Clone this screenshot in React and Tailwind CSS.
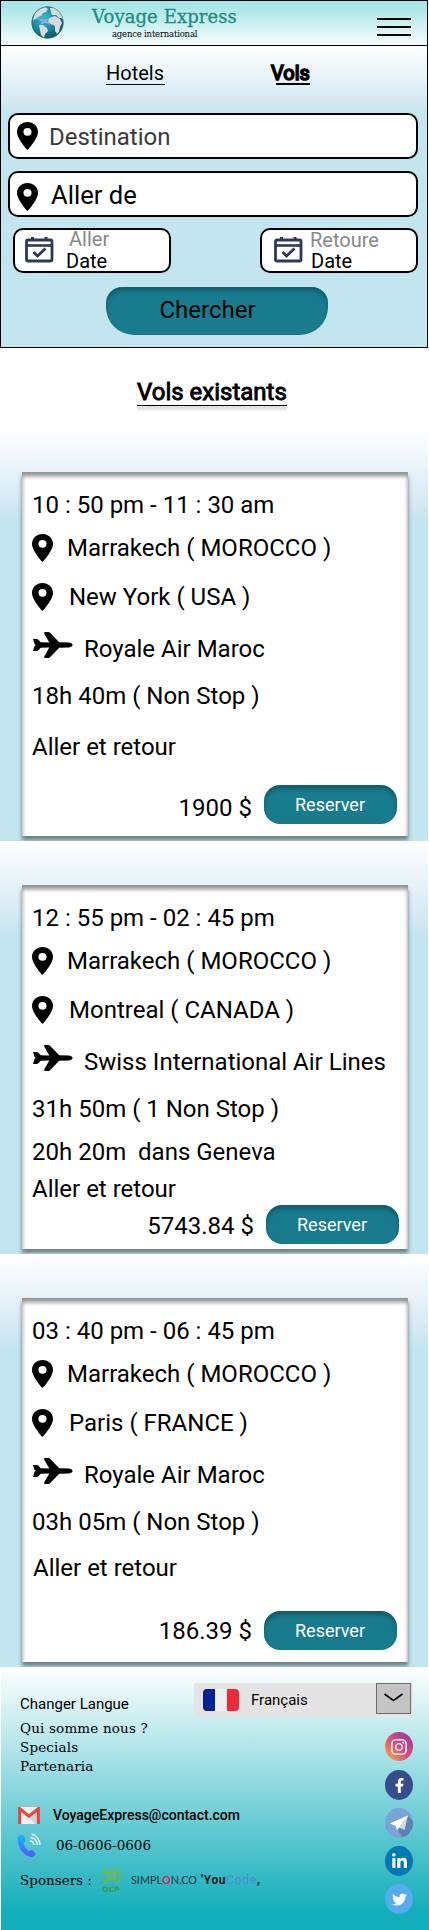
import React from "react";
import { FaInstagram, FaFacebookF, FaLinkedinIn, FaTwitter } from "react-icons/fa";

function Pin({ className = "" }) {
  return (
    <svg className={`h-[28px] w-[21px] shrink-0 ${className}`} viewBox="5 2 14 20" preserveAspectRatio="none">
      <path d="M12 2C8.13 2 5 5.13 5 9c0 5.25 7 13 7 13s7-7.75 7-13c0-3.87-3.13-7-7-7zm0 9.8a2.7 2.8 0 1 1 0-5.6 2.7 2.8 0 0 1 0 5.6z" />
    </svg>
  );
}

function Plane() {
  return (
    <svg className="-mt-[3px] h-[26px] w-[40px] shrink-0" viewBox="0 0 40 26">
      <path d="M0 7h3.8q1 0 1.6.8l2.3 2.4 8.6.2L11.2 1.4Q10.700 0 12.200 0h3.300q.9 0 1.500.7L26.200 10.300 36 10.500q3.600.6 3.600 2.500T36 15.500l-9.800.2L17 25.300q-.6.7-1.500.7h-3.300q-1.500 0-1-1.400l5.100-9-8.600.2-2.300 2.400q-.6.8-1.600.8H0l1.400-4.600q.1-.9 1.600-1.400-1.500-.5-1.600-1.400z" />
    </svg>
  );
}

function Calendar({ className = "" }) {
  return (
    <svg className={`h-[27px] w-[29px] shrink-0 ${className}`} viewBox="0 0 29 27" fill="none" stroke="#2e3a59">
      <rect x="1.500" y="4" width="25.500" height="21" rx="1.500" strokeWidth="2.800" />
      <path d="M1.500 9.500H27" strokeWidth="2.600" />
      <path d="M7.500 1v4M21 1v4" strokeWidth="3" />
      <path d="M8.500 16l4 4 8-7.500" strokeWidth="2.800" />
    </svg>
  );
}

function Globe() {
  return (
    <svg className="ml-[30px] mt-[5px] h-[33px] w-[33px]" viewBox="0 0 33 33">
      <defs>
        <radialGradient id="sea" cx="38%" cy="35%" r="70%">
          <stop offset="0" stopColor="#35bccb" />
          <stop offset=".6" stopColor="#168497" />
          <stop offset="1" stopColor="#0f4f60" />
        </radialGradient>
        <clipPath id="ball"><circle cx="16.500" cy="16.500" r="16" /></clipPath>
      </defs>
      <circle cx="16.500" cy="16.500" r="16" fill="url(#sea)" />
      <g clipPath="url(#ball)" fill="#d9dcde">
        <path d="M4 7l5-4 5-2 3 2-2 3-3 1-2 3-3 1-2 2-3 1z" />
        <path d="M19 2l6 0 6 5 2 7-3-2-2 0-3-3-4 0-1-3z" />
        <path d="M18 12l6-2 5 3 2 4-2 4-1 5-2 2-2-3 0-5-4-2-3-2z" />
        <path d="M8 19l4 0 4 3 1 3-3 3-1 4-3-3-1-5z" />
      </g>
      <path d="M6 12l8 2 6-3-4 4 4 4-6-2-6 2 3-3z" fill="#8fa6e0" />
      <circle cx="16.500" cy="16.500" r="15.700" fill="none" stroke="#2f6f7c" strokeOpacity=".5" />
    </svg>
  );
}

const BG = "bg-[linear-gradient(180deg,#ffffff_0%,#d5e9f3_18%,#c3e5ef_23%)]";

function Header() {
  return (
    <header className="flex h-[46px] items-start border border-black bg-[linear-gradient(180deg,#a6e5e7_10%,#f6fcfc_100%)]">
      <Globe />
      <div className="ml-[28px] flex w-[147px] flex-col">
        <span className="mt-[3px] whitespace-nowrap font-['DejaVu_Serif',serif] text-[18px] leading-[25px] tracking-[0.100px] text-[#1f8a84] [-webkit-text-stroke:0.300px_#1f8a84]">Voyage Express</span>
        <span className="ml-[20px] whitespace-nowrap font-['DejaVu_Serif',serif] text-[8.500px] leading-[10px] tracking-[-0.200px] text-black">agence international</span>
      </div>
      <div className="ml-auto mr-[16px] mt-[17px] flex w-[34px] flex-col gap-[6px]">
        <i className="h-[2px] bg-black" />
        <i className="h-[2px] bg-black" />
        <i className="h-[2px] bg-black" />
      </div>
    </header>
  );
}

function Search() {
  return (
    <section className={`flex h-[302px] flex-col border border-t-0 border-black ${BG}`}>
      <nav className="flex h-[67px] text-[20px] leading-[24px]">
        <a className="ml-[105px] mt-[15px] h-[24px] w-[59px] border-b border-black">Hotels</a>
        <div className="ml-[106px] mt-[15px] w-[40px]">
          <a className="block h-[22px] [-webkit-text-stroke:1.600px_#000]">Vols</a>
          <div className="ml-[5px] h-[2px] w-[34px] bg-black" />
        </div>
      </nav>
      <div className="ml-[7px] flex h-[46px] w-[410px] items-start rounded-[10px] border-2 border-black bg-white">
        <Pin className="ml-[7px] mt-[7px]" />
        <span className="ml-[11px] mt-[8px] text-[24px] leading-[28px] text-[#3a3a3a]">Destination</span>
      </div>
      <div className="ml-[7px] mt-[12px] flex h-[46px] w-[410px] items-start rounded-[10px] border-2 border-black bg-white">
        <Pin className="ml-[7px] mt-[10px]" />
        <span className="ml-[13px] mt-[8px] text-[25.600px] leading-[28px]">Aller de</span>
      </div>
      <div className="ml-[12px] mt-[11px] flex w-[405px] justify-between text-[20px] leading-[20px]">
        <div className="flex h-[45px] w-[158px] items-start rounded-[10px] border-2 border-black bg-white">
          <Calendar className="ml-[10px] mt-[6px]" />
          <div className="ml-[12px] flex flex-col">
            <span className="-mt-px ml-[3px] text-[#888]">Aller</span>
            <span className="mt-[2px]">Date</span>
          </div>
        </div>
        <div className="flex h-[45px] w-[158px] items-start rounded-[10px] border-2 border-black bg-white">
          <Calendar className="ml-[12px] mt-[6px]" />
          <div className="ml-[7px] flex flex-col">
            <span className="text-[#888]">Retoure</span>
            <span className="ml-px mt-px">Date</span>
          </div>
        </div>
      </div>
      <button className="ml-[105px] mt-[14px] h-[48px] w-[222px] rounded-b-[28px] rounded-t-[16px] bg-[#187b8e] pr-[19px] pb-[2px] text-[24px] leading-[28px] shadow-[inset_0_4px_4px_rgba(0,0,0,0.25)]">Chercher</button>
    </section>
  );
}

const flights = [
  {
    rows: [
      { text: "10 : 50 pm - 11 : 30 am", cls: "mt-[19px]" },
      { icon: "pin", text: "Marrakech ( MOROCCO )", cls: "mt-[15px] gap-[14px]" },
      { icon: "pin", text: "New York ( USA )", cls: "mt-[21px] gap-[16px]" },
      { icon: "plane", text: "Royale Air Maroc", cls: "mt-[24px] gap-[11px] pl-px" },
      { text: "18h 40m ( Non Stop )", cls: "mt-[19px]" },
      { text: "Aller et retour", cls: "mt-[23px]" },
    ],
    price: "1900 $",
    foot: "mt-[24px] mr-[11px] gap-[12px]",
    priceCls: "mt-[9px]",
  },
  {
    rows: [
      { text: "12 : 55 pm - 02 : 45 pm", cls: "mt-[19px]" },
      { icon: "pin", text: "Marrakech ( MOROCCO )", cls: "mt-[15px] gap-[14px]" },
      { icon: "pin", text: "Montreal ( CANADA )", cls: "mt-[21px] gap-[16px]" },
      { icon: "plane", text: "Swiss International Air Lines", cls: "mt-[24px] gap-[11px] pl-px" },
      { text: "31h 50m ( 1 Non Stop )", cls: "mt-[19px]" },
      { text: "20h 20m  dans Geneva", cls: "mt-[15px]" },
      { text: "Aller et retour", cls: "mt-[9px]" },
    ],
    price: "5743.84 $",
    foot: "mt-[2px] mr-[9px] gap-[12px]",
    priceCls: "mt-[7px]",
  },
  {
    rows: [
      { text: "03 : 40 pm - 06 : 45 pm", cls: "mt-[19px]" },
      { icon: "pin", text: "Marrakech ( MOROCCO )", cls: "mt-[15px] gap-[14px]" },
      { icon: "pin", text: "Paris ( FRANCE )", cls: "mt-[21px] gap-[16px]" },
      { icon: "plane", text: "Royale Air Maroc", cls: "mt-[24px] gap-[11px] pl-px" },
      { text: "03h 05m ( Non Stop )", cls: "mt-[19px]" },
      { text: "Aller et retour", cls: "mt-[18px] pl-px" },
    ],
    price: "186.39 $",
    foot: "mt-[29px] mr-[11px] gap-[12px]",
    priceCls: "mt-[6px]",
  },
];

function Flight({ f }) {
  return (
    <section className={`h-[413px] pl-[22px] pt-[44px] ${BG}`}>
      <article className="flex h-[364px] w-[386px] flex-col bg-white pl-[10px] text-[24px] leading-[28px] shadow-[0_4px_4px_rgba(0,0,0,0.25),0_4px_4px_rgba(0,0,0,0.25),inset_0_4px_4px_rgba(0,0,0,0.25),inset_0_4px_4px_rgba(0,0,0,0.25)]">
        {f.rows.map((r, i) => (
          <div key={i} className={`flex h-[28px] items-start whitespace-pre ${r.cls}`}>
            {r.icon === "pin" && <Pin />}
            {r.icon === "plane" && <Plane />}
            <span>{r.text}</span>
          </div>
        ))}
        <div className={`flex items-start justify-end ${f.foot}`}>
          <span className={f.priceCls}>{f.price}</span>
          <button className="h-[39px] w-[133px] rounded-[16px] bg-[#187b8e] pr-px text-[18px] leading-[22px] text-white shadow-[inset_0_4px_4px_rgba(0,0,0,0.25)]">Reserver</button>
        </div>
      </article>
    </section>
  );
}

function Gmail() {
  return (
    <svg className="h-[17px] w-[22px] shrink-0" viewBox="0 0 22 17">
      <rect x="1" y="0" width="20" height="17" rx="1.500" fill="#eceff1" />
      <path d="M11 10l8-6v13H17z" fill="#cfd4d8" />
      <path d="M1.600 17V1.500L11 9.200l9.400-7.700V17" fill="none" stroke="#f14336" strokeWidth="3" />
    </svg>
  );
}

function Phone() {
  return (
    <svg className="h-[26px] w-[24px] shrink-0" viewBox="0 0 24 26">
      <defs>
        <linearGradient id="ph" x1="0" y1="0" x2="0" y2="1">
          <stop offset="0" stopColor="#15b8ff" />
          <stop offset="1" stopColor="#5a55ff" />
        </linearGradient>
      </defs>
      <path d="M1 5q2-3 5-2 2 2 2.500 5 0 1.500-2 2.500 1 5 5 8.500 2-1.500 3.500-1 2.500 1.500 3.500 4-1 3-4.500 3Q8 24 3.500 17.500-.5 10 1 5z" fill="url(#ph)" />
      <g fill="none" stroke="#dff4fb" strokeWidth="1.500">
        <path d="M13 9q3.500 0 4 4M13.500 5.500q6 .5 7 7.500M14.500 2q8 2 8.500 11" />
      </g>
    </svg>
  );
}

function Ocp() {
  return (
    <div className="flex w-[22px] shrink-0 flex-col items-center">
      <svg className="h-[19px] w-[21px]" viewBox="0 0 21 18">
        <path d="M10.500 2l1.600 3.700 4 .3-3 2.700.9 4-3.500-2.100-3.500 2.100.9-4-3-2.700 4-.3z" fill="none" stroke="#7cb82f" strokeWidth="1.800" />
        <path d="M4 1Q-1.500 9 6 17M17 1q5.500 8-2 16" fill="none" stroke="#6cba45" strokeWidth="2.200" strokeDasharray="2.500 1" />
      </svg>
      <span className="font-['DejaVu_Sans',sans-serif] text-[7.500px] font-bold leading-[7px] text-[#3c9a4a]">OCP</span>
    </div>
  );
}

function Footer() {
  return (
    <footer className="ml-px flex h-[263px] w-[428px] bg-[linear-gradient(180deg,#ffffff_0%,#13aebb_93%)]">
      <div className="flex w-[193px] shrink-0 flex-col whitespace-nowrap pl-[19px]">
        <span className="mt-[27px] text-[15px] leading-[20px]">Changer Langue</span>
        <div className="mt-[5px] flex flex-col font-['DejaVu_Serif',serif] text-[13.500px] leading-[19px] tracking-[0.160px]">
          <span>Qui somme nous ?</span>
          <span>Specials</span>
          <span>Partenaria</span>
        </div>
        <div className="-ml-[2px] mt-[29px] flex h-[20px] items-center gap-[13px]">
          <Gmail />
          <span className="text-[14px] font-medium leading-[20px]">VoyageExpress@contact.com</span>
        </div>
        <div className="-ml-[3px] mt-[7px] flex h-[26px] items-center gap-[15px]">
          <Phone />
          <span className="font-['DejaVu_Serif',serif] text-[13.500px]">06-0606-0606</span>
        </div>
        <div className="mt-[9px] flex h-[26px] items-center">
          <span className="w-[80px] shrink-0 font-['DejaVu_Serif',serif] text-[13.500px]">Sponsers :</span>
          <Ocp />
          <span className="ml-[9px] w-[69px] shrink-0 font-['Lato',sans-serif] text-[10.800px] text-[#26343a]">SIMPL<b className="text-[#e0195c]">O</b>N.CO</span>
          <span className="ml-px text-[12px] font-bold tracking-[0.700px] text-[#101820]">'You<span className="font-medium text-[#4a90d9]">Code</span>,</span>
        </div>
      </div>
      <div className="flex flex-col items-end">
        <div className="mt-[16px] flex h-[34px] w-[219px] items-start bg-[#e4e4e4]">
          <div className="ml-[9px] mt-[6px] flex h-[22px] w-[36px] overflow-hidden rounded-[4px]">
            <i className="flex-1 bg-[#002496]" />
            <i className="flex-1 bg-[#eee]" />
            <i className="flex-1 bg-[#ee2939]" />
          </div>
          <span className="ml-[12px] mt-[7px] text-[15px] leading-[20px]">Français</span>
          <div className="ml-auto mr-[2px] flex h-[31px] w-[35px] items-start justify-center border border-[#6b6b6b] bg-[#c4c4c4]">
            <svg className="mt-[9px] h-[9px] w-[19px]" viewBox="0 0 19 9" fill="none" stroke="#000" strokeWidth="1.600">
              <path d="M.5 1l9 6.500L18.500 1" />
            </svg>
          </div>
        </div>
        <div className="mt-[15px] flex w-[28px] flex-col gap-[8px] text-white">
          <div className="mb-px flex h-[29px] items-center justify-center rounded-[50%] bg-[linear-gradient(45deg,#f9b43a_5%,#e0507a_45%,#a13c96_85%)]"><FaInstagram size={18} /></div>
          <div className="flex h-[30px] items-center justify-center rounded-[50%] bg-[#354d8c]"><FaFacebookF size={15} /></div>
          <div className="flex h-[30px] items-center justify-center overflow-hidden rounded-[50%] bg-[#7aa3d9]">
            <svg className="h-[30px] w-[28px]" viewBox="0 0 28 30">
              <path d="M23 8l9 9-6 13H18l-5-7z" fill="#5b84b5" />
              <path d="M5 15.500L23 7.500 19.500 22l-6-3z" fill="#d5d8dc" />
              <path d="M5 15.500L23 7.500 11.500 18zM10.500 17.500L23 7.500 12 22z" fill="#fff" />
            </svg>
          </div>
          <div className="flex h-[30px] items-center justify-center rounded-[50%] bg-[#0077b7]"><FaLinkedinIn size={17} /></div>
          <div className="flex h-[30px] items-center justify-center rounded-[50%] bg-[#55acee]"><FaTwitter size={15} /></div>
        </div>
      </div>
    </footer>
  );
}

export default function App() {
  return (
    <div className="h-[1930px] w-[429px] overflow-hidden bg-white font-['Roboto',sans-serif] text-black">
      <div className="w-[428px]">
        <Header />
        <Search />
        <div className="flex h-[80px] pl-[137px] pt-[29px]">
          <h2 className="h-[29px] w-[150px] whitespace-nowrap border-b border-black pt-px text-[24px] leading-[28px] shadow-[0_4px_2px_rgba(0,0,0,0.12)] [-webkit-text-stroke:0.900px_#000]">Vols existants</h2>
        </div>
        {flights.map((f) => (
          <Flight key={f.price} f={f} />
        ))}
      </div>
      <Footer />
    </div>
  );
}
